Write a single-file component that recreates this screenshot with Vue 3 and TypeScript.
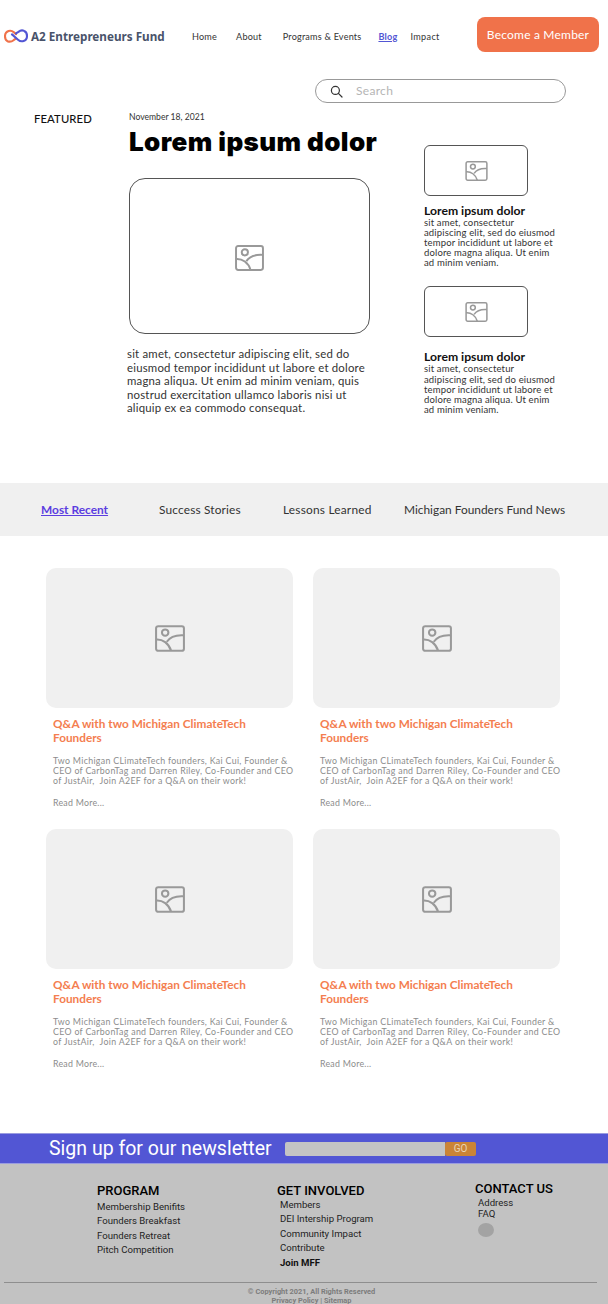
<template>
  <div class="page">
    <header class="site-header">
      <div class="brand">
        <svg class="logo" width="24" height="14" viewBox="0 0 24 14" fill="none">
          <path d="M11.8 9.6 9.6 11.2C7.6 12.8 5.6 12.9 3.9 12.4 2 11.7 1 9.5 1 7.2 1 4.8 2.4 2.8 4.6 2 6.6 1.4 8.4 2 10 3.4L12 5.2" stroke="#f0724a" stroke-width="2.1" stroke-linecap="round" />
          <path d="M12 4.4 14.4 2.8C16.2 1.4 18.4 1.1 20.2 1.9 22 2.6 23 4.6 23 6.9 23 9.3 21.6 11.3 19.6 12 17.6 12.7 15.6 12.1 14 10.7L8 5.4" stroke="#5256d4" stroke-width="2.1" stroke-linecap="round" />
        </svg>
        <span class="brand-name">A2 Entrepreneurs Fund</span>
      </div>
      <nav class="main-nav">
        <a class="nav-home">Home</a>
        <a class="nav-about">About</a>
        <a class="nav-programs">Programs &amp; Events</a>
        <a class="nav-blog">Blog</a>
        <a class="nav-impact">Impact</a>
      </nav>
      <button class="member-btn">Become a Member</button>
    </header>

    <div class="search-row">
      <div class="search-box">
        <svg width="13" height="13" viewBox="0 0 13 13" fill="none" stroke="#333" stroke-width="1.2">
          <circle cx="5.4" cy="5.4" r="4" />
          <path d="M8.4 8.4 12 12" stroke-linecap="round" />
        </svg>
        <span class="search-text">Search</span>
      </div>
    </div>

    <section class="featured">
      <div class="featured-label">FEATURED</div>
      <div class="featured-main">
        <div class="date">November 18, 2021</div>
        <h1>Lorem ipsum dolor</h1>
        <div class="frame frame-large">
          <svg class="pic" width="29" height="26" viewBox="0 0 28 25" fill="none">
            <rect x="1" y="1" width="26" height="23" rx="2" />
            <circle cx="9.5" cy="7" r="3" />
            <path d="M1 13.5C7 13 13 17 15 24M11 15.5C14 11 20 9 27 9.5" />
          </svg>
        </div>
        <p class="lead">
          sit amet, consectetur adipiscing elit, sed do eiusmod tempor incididunt ut labore et dolore magna aliqua. Ut enim ad minim veniam, quis nostrud exercitation ullamco laboris nisi ut aliquip ex ea commodo consequat.
        </p>
      </div>
      <div class="featured-side">
        <article v-for="n in 2" :key="n" class="side-item">
          <div class="frame frame-small">
            <svg class="pic" width="23" height="20" viewBox="0 0 28 25" fill="none">
              <rect x="1" y="1" width="26" height="23" rx="2" />
              <circle cx="9.5" cy="7" r="3" />
              <path d="M1 13.5C7 13 13 17 15 24M11 15.5C14 11 20 9 27 9.5" />
            </svg>
          </div>
          <h3>Lorem ipsum dolor</h3>
          <p>sit amet, consectetur<br />adipiscing elit, sed do eiusmod tempor incididunt ut labore et dolore magna aliqua. Ut enim<br />ad minim veniam.</p>
        </article>
      </div>
    </section>

    <div class="tabs">
      <a
        v-for="tab in tabs"
        :key="tab"
        class="tab"
        :class="{ active: tab === 'Most Recent' }"
      >{{ tab }}</a>
    </div>

    <section class="cards">
      <article v-for="n in 4" :key="n" class="card">
        <div class="card-image">
          <svg class="pic" width="30" height="27" viewBox="0 0 28 25" fill="none">
            <rect x="1" y="1" width="26" height="23" rx="2" />
            <circle cx="9.5" cy="7" r="3" />
            <path d="M1 13.5C7 13 13 17 15 24M11 15.5C14 11 20 9 27 9.5" />
          </svg>
        </div>
        <h2>Q&amp;A with two Michigan ClimateTech Founders</h2>
        <p class="excerpt">Two Michigan CLimateTech founders, Kai Cui, Founder &amp;<br />CEO of CarbonTag and Darren Riley, Co-Founder and CEO<br />of JustAir,&nbsp; Join A2EF for a Q&amp;A on their work!</p>
        <a class="read-more">Read More...</a>
      </article>
    </section>

    <div class="newsletter">
      <span class="newsletter-title">Sign up for our newsletter</span>
      <div class="newsletter-form">
        <div class="newsletter-input"></div>
        <button class="go-btn">GO</button>
      </div>
    </div>

    <footer class="site-footer">
      <div class="footer-cols">
        <div class="col col-program">
          <h4>PROGRAM</h4>
          <a v-for="item in programLinks" :key="item">{{ item }}</a>
        </div>
        <div class="col col-involved">
          <h4>GET INVOLVED</h4>
          <a v-for="item in involvedLinks" :key="item">{{ item }}</a>
          <a class="strong">Join MFF</a>
        </div>
        <div class="col col-contact">
          <h4>CONTACT US</h4>
          <a>Address</a>
          <a>FAQ</a>
          <span class="social-dot"></span>
        </div>
      </div>
      <div class="legal">
        <div>© Copyright 2021, All Rights Reserved</div>
        <div>Privacy Policy | Sitemap</div>
      </div>
    </footer>
  </div>
</template>

<script setup lang="ts">
const tabs: string[] = ['Most Recent', 'Success Stories', 'Lessons Learned', 'Michigan Founders Fund News']

const programLinks: string[] = [
  'Membership Benifits',
  'Founders Breakfast',
  'Founders Retreat',
  'Pitch Competition'
]

const involvedLinks: string[] = [
  'Members',
  'DEI Intership Program',
  'Community Impact',
  'Contribute'
]
</script>

<style>
html,
body {
  margin: 0;
  background: #fff;
}
</style>

<style scoped>
.page {
  width: 608px;
  height: 1304px;
  overflow: hidden;
  font-family: Lato, "Open Sans", sans-serif;
  color: #222;
}

.site-header {
  display: flex;
  align-items: flex-start;
  height: 79px;
  padding: 17px 9px 0 4px;
  box-sizing: border-box;
}

.brand {
  display: flex;
  align-items: center;
  gap: 3px;
  height: 38px;
  width: 188px;
  flex-shrink: 0;
}

.brand-name {
  font-family: "Noto Sans", sans-serif;
  font-size: 11.7px;
  font-weight: 700;
  color: #49536a;
  white-space: nowrap;
}

.main-nav {
  display: flex;
  align-items: center;
  height: 38px;
  font-size: 9.1px;
  letter-spacing: 0.2px;
  color: #333;
  flex: 1;
}

.main-nav a {
  white-space: nowrap;
}

.nav-home {
  margin-right: 19px;
}

.nav-about {
  margin-right: 21px;
}

.nav-programs {
  margin-right: 17px;
}

.nav-blog {
  margin-right: 13px;
  color: #5256d4;
  font-weight: 700;
  text-decoration: underline;
}

.main-nav .nav-impact {
  letter-spacing: 0.35px;
}

.member-btn {
  width: 122px;
  height: 35px;
  border: 0;
  border-radius: 8px;
  background: #f0724a;
  color: #fff;
  font-family: inherit;
  font-size: 12px;
  letter-spacing: 0.2px;
  padding: 0;
  flex-shrink: 0;
}

.search-row {
  padding-left: 315px;
  height: 24px;
}

.search-box {
  width: 251px;
  height: 24px;
  box-sizing: border-box;
  border: 1px solid #999;
  border-radius: 12px;
  display: flex;
  align-items: center;
  padding-left: 14px;
}

.search-text {
  margin: 0 0 2px 13px;
  font-size: 12px;
  color: #b5b5b5;
  letter-spacing: 0.3px;
}

.featured {
  display: flex;
  height: 373px;
  padding-top: 7px;
  box-sizing: content-box;
}

.featured-label {
  width: 95px;
  margin-left: 34px;
  font-size: 11.3px;
  font-weight: 500;
  color: #111;
  letter-spacing: 0.1px;
  line-height: 18px;
}

.featured-main {
  width: 241px;
}

.date {
  font-size: 8.6px;
  line-height: 14px;
  color: #333;
}

h1 {
  margin: 2px 0 21px;
  font-family: Inter, sans-serif;
  font-size: 26px;
  font-weight: 900;
  letter-spacing: 0.4px;
  color: #000;
  line-height: 31px;
  white-space: nowrap;
}

.frame {
  display: flex;
  align-items: center;
  justify-content: center;
  box-sizing: border-box;
  border: 1px solid #555;
}

.frame-large {
  width: 241px;
  height: 156px;
  border-radius: 16px;
  padding-top: 4px;
}

.frame-small {
  width: 104px;
  height: 51px;
  border-radius: 6px;
}

.pic {
  stroke: #999;
  stroke-width: 1.9;
}

.lead {
  margin: 13px 0 0 -2px;
  width: 245px;
  font-size: 11.4px;
  line-height: 13.5px;
  letter-spacing: 0.2px;
  color: #333;
}

.featured-side {
  width: 134px;
  margin-left: 54px;
  padding-top: 35px;
}

.side-item {
  margin-bottom: 18px;
}

.side-item:last-child .frame-small {
  margin-bottom: 13px;
}

.side-item h3 {
  margin: 8px 0 0;
  font-size: 12.2px;
  font-weight: 700;
  line-height: 14px;
  color: #111;
}

.side-item p {
  margin: 0;
  font-size: 9.5px;
  line-height: 10.1px;
  letter-spacing: 0.15px;
  color: #333;
}

.tabs {
  height: 53px;
  background: #f0f0f0;
  display: flex;
  align-items: center;
  font-size: 11.9px;
  color: #333;
}

.tab {
  white-space: nowrap;
}

.tab:nth-child(1) {
  margin-left: 41px;
  width: 118px;
}

.tab:nth-child(2) {
  width: 124px;
  letter-spacing: 0.15px;
}

.tab:nth-child(3) {
  width: 121px;
  letter-spacing: 0.2px;
}

.tab.active {
  color: #5b3de0;
  font-weight: 700;
  text-decoration: underline;
}

.cards {
  display: grid;
  grid-template-columns: 247px 247px;
  grid-auto-rows: 261px;
  column-gap: 20px;
  padding: 32px 0 0 46px;
  height: 597px;
  box-sizing: border-box;
}

.card-image {
  height: 140px;
  border-radius: 10px;
  background: #f0f0f0;
  display: flex;
  align-items: center;
  justify-content: center;
}

.card h2 {
  margin: 9px 0 0 7px;
  font-size: 11.8px;
  font-weight: 700;
  line-height: 13.5px;
  color: #f47e50;
  width: 210px;
}

.excerpt {
  margin: 12px 0 0 7px;
  width: 245px;
  font-size: 8.8px;
  line-height: 10.1px;
  color: #8c8c8c;
  letter-spacing: 0.32px;
  white-space: nowrap;
}

.read-more {
  display: block;
  margin: 12px 0 0 7px;
  font-size: 8.8px;
  line-height: 10px;
  letter-spacing: 0.25px;
  color: #8c8c8c;
}

.newsletter {
  height: 31px;
  background: #5256d4;
  display: flex;
  align-items: center;
  font-family: Roboto, sans-serif;
  border-top: 1px solid #9a9ce0;
  border-bottom: 1px solid #9a9ce0;
  box-sizing: border-box;
}

.newsletter-title {
  margin-left: 49px;
  width: 236px;
  font-size: 19.5px;
  color: #fff;
  white-space: nowrap;
}

.newsletter-form {
  display: flex;
  height: 14px;
}

.newsletter-input {
  width: 160px;
  background: #c4c4c4;
  border-radius: 2px 0 0 2px;
}

.go-btn {
  width: 31px;
  height: 14px;
  border: 0;
  padding: 0;
  background: #cb8436;
  color: #e8d4b8;
  border-radius: 2px;
  font-family: Roboto, sans-serif;
  font-size: 10px;
}

.site-footer {
  height: 141px;
  background: #c2c2c2;
  font-family: Roboto, sans-serif;
  color: #222;
}

.footer-cols {
  display: flex;
  height: 119px;
  border-bottom: 1px solid #8e8e8e;
  margin: 0 11px 0 4px;
  box-sizing: border-box;
}

.col {
  display: flex;
  flex-direction: column;
  align-items: flex-start;
  font-size: 9.6px;
  line-height: 14.4px;
}

.col h4 {
  margin: 0;
  font-size: 13px;
  font-weight: 500;
  color: #000;
  line-height: 15px;
}

.col-program {
  margin-left: 93px;
  width: 180px;
  padding-top: 19px;
}

.col-program h4 {
  margin-bottom: 2px;
}

.col-involved {
  width: 198px;
  padding-top: 19px;
}

.col-involved a {
  margin-left: 3px;
}

.col-contact {
  padding-top: 17px;
  line-height: 11.4px;
}

.col-contact h4 {
  margin-bottom: 1px;
}

.col-contact a {
  margin-left: 3px;
}

.strong {
  font-weight: 700;
  color: #111;
}

.social-dot {
  width: 16px;
  height: 14px;
  margin: 3px 0 0 3px;
  border-radius: 50%;
  background: #a3a3a3;
}

.legal {
  margin-top: 5px;
  text-align: center;
  font-size: 7.4px;
  font-weight: 700;
  line-height: 8.6px;
  color: #7c7c7c;
  width: 623px;
}
</style>
